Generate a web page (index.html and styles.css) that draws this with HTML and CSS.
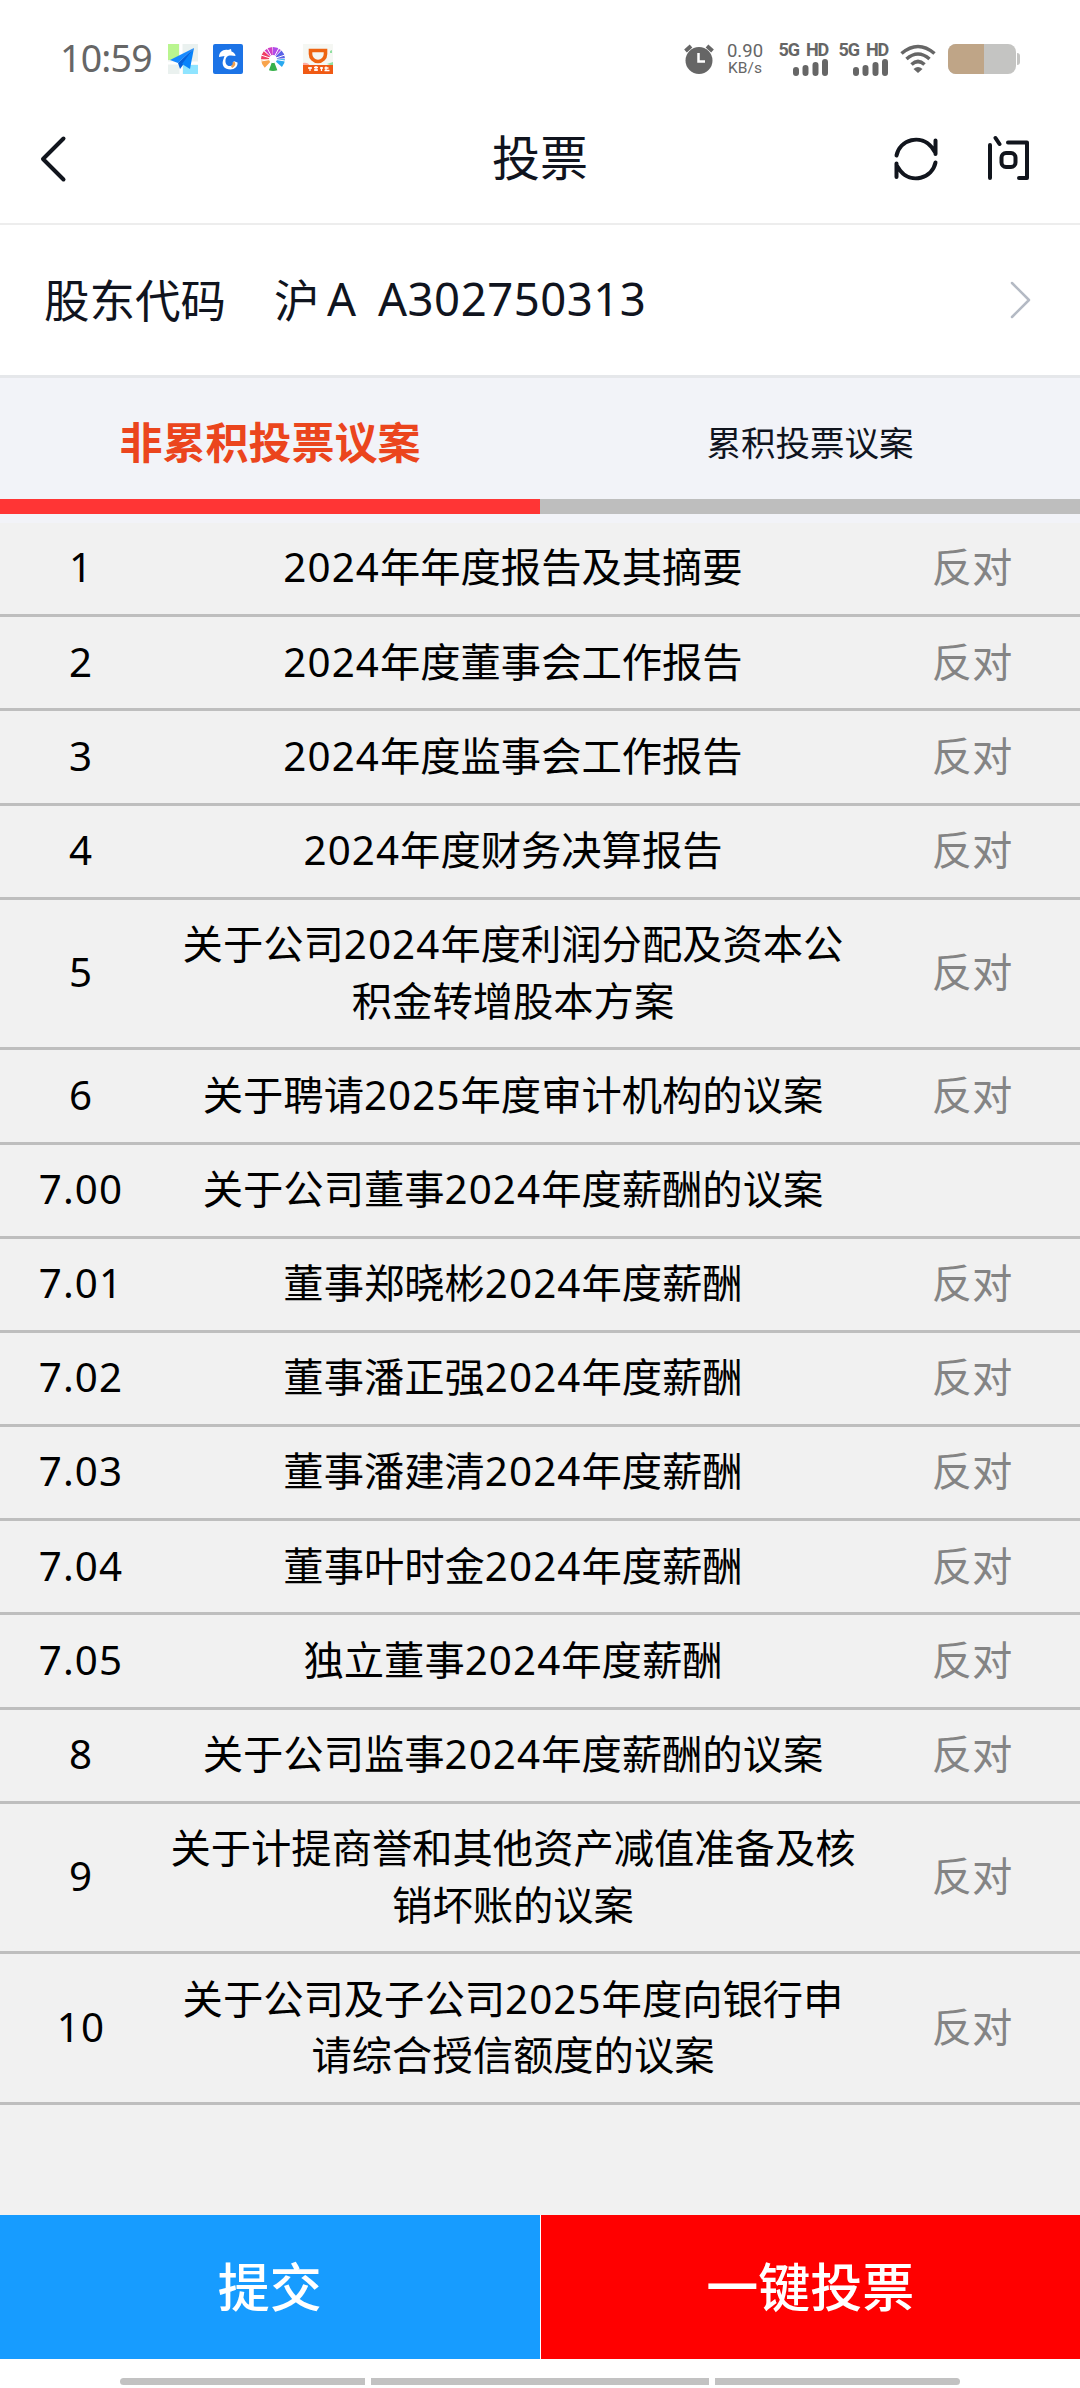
FILE: index.html
```html
<!DOCTYPE html>
<html lang="zh-CN">
<head>
<meta charset="utf-8">
<title>投票</title>
<link rel="stylesheet" href="styles.css">
</head>
<body>
<div class="app">
  <div class="status">
    <span class="clock">10:59</span>
    <div class="apps">
      <svg width="30" height="30" viewBox="0 0 30 30"><path fill="#eaf1ef" d="M0 0h30v30H0z"/><path fill="#b9f58f" d="M0 0h11v16H0z"/><path fill="#8fe4ff" d="M15 21h15v9H15z"/><path stroke="#fff" stroke-width="3" d="M13 0v30M0 19h30"/><path fill="#1689ff" d="M26 4 2 16l8 3z"/><path fill="#0562dc" d="M26 4 10 19l2 6 3-4z"/><path fill="#0783fb" d="M26 4 14 20l8 5z"/></svg>
      <svg width="30" height="30" viewBox="0 0 30 30"><rect width="30" height="30" rx="2" fill="#1c73e6"/><path fill="#fff" d="M6 13c0-5 4-8 9-7l3-1 .5 2.500c2.500 1 4 2.500 4 4.500l-4.500-.5c-4 0-5 2-5.500 4.500-.5 4 2 6.500 5 6 3-.5 4-3 3-5l4 1.500c.5 4-3 7-7 7-6 0-9-4-7.500-9l1.500-4.500z"/><path stroke="#f3a14d" stroke-width="2.400" fill="none" d="M20.500 18c1 2 0 4-2 5"/></svg>
      <svg width="30" height="30" viewBox="0 0 30 30" fill="none" stroke-width="8"><g transform="rotate(-90 15 15)"><circle cx="15" cy="15" r="8" stroke="#b04be8" stroke-dasharray="5.7 44.6"/><circle cx="15" cy="15" r="8" stroke="#5b62e6" stroke-dasharray="5.7 44.6" stroke-dashoffset="-6.3"/><circle cx="15" cy="15" r="8" stroke="#29a9ef" stroke-dasharray="5.7 44.6" stroke-dashoffset="-12.6"/><circle cx="15" cy="15" r="8" stroke="#36b14a" stroke-dasharray="5.7 44.6" stroke-dashoffset="-22"/><circle cx="15" cy="15" r="8" stroke="#f8a44c" stroke-dasharray="5.7 44.6" stroke-dashoffset="-31"/><circle cx="15" cy="15" r="8" stroke="#ef3f64" stroke-dasharray="5.7 44.6" stroke-dashoffset="-37.3"/><circle cx="15" cy="15" r="8" stroke="#d23fc4" stroke-dasharray="5.7 44.6" stroke-dashoffset="-43.8"/></g><path stroke="#fff" stroke-width="1" d="M15 15 9 4M15 15 21 4M15 15 3 11M15 15l12-4M15 15 3 17M15 15l12 2"/></svg>
      <svg width="30" height="30" viewBox="0 0 30 30"><path fill="#f5f7f3" d="M0 0h30v30H0z"/><path fill="none" stroke="#ee6412" stroke-width="3.6" d="M7.500 6.500h15v3.500a7.500 7.500 0 0 1-15 0z"/><path fill="#ffaaa0" d="M0 19q5-1 7 3H0z"/><path fill="#8fdfa0" d="M27 7l2-1v3h-2zM24 20l6-2v4z"/><path fill="#f05a14" d="M0 21h30v9H0z"/><path stroke="#fff" stroke-width="1.300" d="M5 24h4M7 23v4M11 23.500h4M11 26h4M13 22v5M17 24h3M18.500 23v4M23 22.500v4M21.500 24h4M21.500 26.500h5"/></svg>
    </div>
    <div class="system">
      <svg class="alarm" width="30" height="30" viewBox="0 0 30 30"><circle cx="15" cy="16.500" r="13.500" fill="#666"/><path stroke="#666" stroke-width="4" d="M1.500 7 7 2M28.500 7 23 2"/><path fill="none" stroke="#fff" stroke-width="2.500" d="M14.500 9v8.500H21"/></svg>
      <div class="rate"><span>0.90</span><span class="unit">KB/s</span></div>
      <div class="sim"><span>5G HD</span><svg width="36" height="17" viewBox="0 0 36 17" stroke="#666" stroke-width="6" stroke-linecap="round"><path d="M4 11v3M13.500 9v5M23.500 6v8M33 3v11"/></svg></div>
      <div class="sim"><span>5G HD</span><svg width="36" height="17" viewBox="0 0 36 17" stroke="#666" stroke-width="6" stroke-linecap="round"><path d="M4 11v3M13.500 9v5M23.500 6v8M33 3v11"/></svg></div>
      <svg class="wifi" width="36" height="30" viewBox="0 0 36 30" fill="none" stroke="#666" stroke-width="3.600"><path d="M1.500 9.500q16.500-14 33 0M6.500 15q11.500-10 23 0M11.500 20.500q6.500-6 13 0"/><path fill="#666" stroke="none" d="m18 29-4.500-4q4.500-4 9 0z"/></svg>
      <svg width="72" height="30" viewBox="0 0 72 30"><rect width="68" height="30" rx="8" fill="#c4c4c2"/><path fill="#bfa587" d="M8 0h28v30H8a8 8 0 0 1-8-8V8a8 8 0 0 1 8-8"/><path fill="#c4c4c2" d="M69 9q3 0 3 3v6q0 3-3 3z"/></svg>
    </div>
  </div>

  <header class="header">
    <svg width="36" height="50" viewBox="0 0 36 50"><path d="M32.500 4.500 12 25l20.500 20.500"/></svg>
    <h1>投票</h1>
    <div class="actions">
      <svg width="50" height="50" viewBox="0 0 50 50"><path d="M5.500 21.500a20 20 0 0 1 35-8.500l4 6M44.500 6.500v13.500M44.500 28.500a20 20 0 0 1-35 8.500l-4-6M5.500 43V29.500"/></svg>
      <svg width="50" height="50" viewBox="0 0 50 50"><path d="M8 11v33M13.500 4l4 6M26 8.500h19V44h-8"/><rect x="19.500" y="19" width="14" height="14" rx="4.500"/></svg>
    </div>
  </header>

  <div class="account">
    <span class="label">股东代码</span>
    <span class="market">沪</span><span class="letter">A</span><span class="code">A302750313</span>
    <svg class="chevron" width="22" height="38" viewBox="0 0 22 38"><path d="M2 2l17 17L2 36"/></svg>
  </div>

  <nav class="tabs">
    <div class="tab active">非累积投票议案</div>
    <div class="tab">累积投票议案</div>
  </nav>

  <main class="list">
    <div class="row"><span class="n">1</span><span><b>2024</b>年年度报告及其摘要</span><span class="vote">反对</span></div>
    <div class="row"><span class="n">2</span><span><b>2024</b>年度董事会工作报告</span><span class="vote">反对</span></div>
    <div class="row"><span class="n">3</span><span><b>2024</b>年度监事会工作报告</span><span class="vote">反对</span></div>
    <div class="row"><span class="n">4</span><span><b>2024</b>年度财务决算报告</span><span class="vote">反对</span></div>
    <div class="row tall"><span class="n">5</span><span>关于公司<b>2024</b>年度利润分配及资本公<br>积金转增股本方案</span><span class="vote">反对</span></div>
    <div class="row"><span class="n">6</span><span>关于聘请<b>2025</b>年度审计机构的议案</span><span class="vote">反对</span></div>
    <div class="row"><span class="n">7.00</span><span>关于公司董事<b>2024</b>年度薪酬的议案</span><span class="vote"></span></div>
    <div class="row"><span class="n">7.01</span><span>董事郑晓彬<b>2024</b>年度薪酬</span><span class="vote">反对</span></div>
    <div class="row"><span class="n">7.02</span><span>董事潘正强<b>2024</b>年度薪酬</span><span class="vote">反对</span></div>
    <div class="row"><span class="n">7.03</span><span>董事潘建清<b>2024</b>年度薪酬</span><span class="vote">反对</span></div>
    <div class="row"><span class="n">7.04</span><span>董事叶时金<b>2024</b>年度薪酬</span><span class="vote">反对</span></div>
    <div class="row"><span class="n">7.05</span><span>独立董事<b>2024</b>年度薪酬</span><span class="vote">反对</span></div>
    <div class="row"><span class="n">8</span><span>关于公司监事<b>2024</b>年度薪酬的议案</span><span class="vote">反对</span></div>
    <div class="row tall"><span class="n">9</span><span>关于计提商誉和其他资产减值准备及核<br>销坏账的议案</span><span class="vote">反对</span></div>
    <div class="row tall"><span class="n">10</span><span>关于公司及子公司<b>2025</b>年度向银行申<br>请综合授信额度的议案</span><span class="vote">反对</span></div>
  </main>

  <footer class="buttons">
    <div class="submit">提交</div>
    <div class="all">一键投票</div>
  </footer>
  <div class="gesture"><i></i><i></i><i></i></div>
</div>
</body>
</html>
```

FILE: styles.css
```css
* { box-sizing: border-box; }
body { margin: 0; background: #fff; }
.app {
  width: 1080px; height: 2388px; display: flex; flex-direction: column; overflow: hidden;
  font-family: "Noto Sans", "Noto Sans CJK SC", sans-serif; color: #10141e; white-space: nowrap;
}
svg { display: block; flex: none; }

.status { height: 110px; padding: 9px 60px 0 60px; display: flex; align-items: center; color: #666; }
.clock { width: 108px; font-size: 37.5px; letter-spacing: -.8px; line-height: 50px; padding-bottom: 3px; }
.apps { display: flex; gap: 15px; padding-bottom: 1px; }
.system { margin-left: auto; display: flex; align-items: center; padding-bottom: 1px; }
.alarm { margin-right: 12px; }
.rate { width: 38px; margin-right: 16px; display: flex; flex-direction: column; align-items: center; font-family: "Roboto", sans-serif; font-size: 18.5px; line-height: 18px; }
.rate .unit { font-size: 15.5px; line-height: 16px; }
.sim { width: 48px; margin-right: 12px; display: flex; flex-direction: column; align-items: flex-end; gap: 2px; font: bold 18px/15px "Roboto", sans-serif; letter-spacing: -1.2px; word-spacing: 4px; }
.wifi { margin-right: 12px; }

.header { height: 115px; border-bottom: 2px solid #ededed; display: grid; grid-template-columns: 160px 1fr 160px; align-items: center; padding: 0 31px 16px 31px; }
.header svg { fill: none; stroke: #11151d; stroke-width: 4; stroke-linecap: round; stroke-linejoin: round; }
.header h1 { margin: 0; font-size: 48px; line-height: 60px; font-weight: 400; text-align: center; padding-bottom: 2px; }
.actions { display: flex; gap: 41px; justify-content: flex-end; margin-right: 17px; }

.account { height: 153px; border-bottom: 3px solid #e5e7ea; display: flex; align-items: center; padding: 0 48px 0 44px; font-size: 45.5px; }
.account span { padding-bottom: 4px; }
.label { width: 230px; }
.market { width: 53px; }
.letter { width: 51px; }
.code { letter-spacing: .5px; }
.chevron { margin-left: auto; fill: none; stroke: #b4bac4; stroke-width: 2.5; stroke-linecap: round; stroke-linejoin: round; }

.tabs { height: 145px; display: flex; background: #f2f3f8; padding-bottom: 9px; }
.tab { flex: 1; display: flex; align-items: center; justify-content: center; padding-top: 4px; border-bottom: 15px solid #bebebe; font-size: 34.5px; }
.tab.active { color: #eb451d; font-size: 43px; font-weight: 700; border-color: #ff3535; }

.list { flex: 1; background: #f1f1f1; color: #000; font-size: 40.3px; line-height: 56.4px; }
.row { height: 94.2px; padding-bottom: 2px; border-bottom: 3px solid #bebebe; display: grid; grid-template-columns: 15fr 65fr 20fr; align-items: center; text-align: center; }
.row b, .n { font-weight: 400; letter-spacing: 1.1px; }
.row.tall { height: 150.6px; }
.vote { color: #848484; }

.buttons { height: 144px; display: grid; grid-template-columns: 1fr 1fr; gap: 1px; font-size: 52px; font-weight: 500; color: #fff; }
.buttons div { display: flex; align-items: center; justify-content: center; padding-bottom: 6px; }
.submit { background: #179cff; }
.all { background: #f00; }
.gesture { height: 29px; padding: 19px 120px 3px; display: grid; grid-template-columns: 245px 338px 245px; gap: 6px; }
.gesture i { background: #c2c2c2; }
.gesture i:first-child { border-radius: 4px 0 0 4px; }
.gesture i:last-child { border-radius: 0 4px 4px 0; }
```
